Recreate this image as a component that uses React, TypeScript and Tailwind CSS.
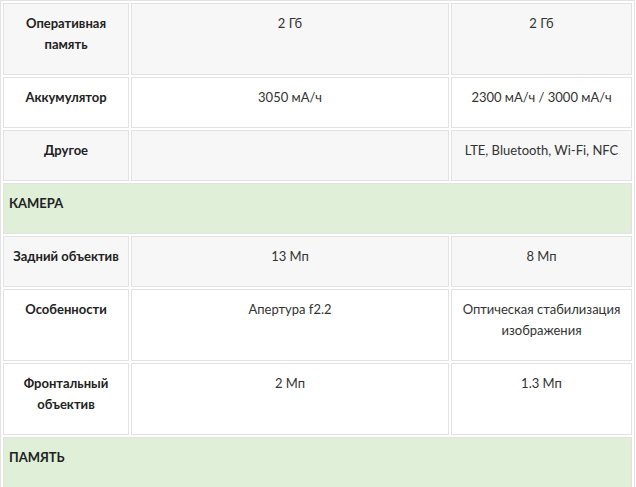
import React from "react";

type Row =
  | { kind: "section"; title: string }
  | { kind: "spec"; label: React.ReactNode; a: React.ReactNode; b: React.ReactNode; shade?: boolean };

const rows: Row[] = [
  { kind: "spec", label: <>Оперативная<br />память</>, a: "2 Гб", b: "2 Гб", shade: true },
  { kind: "spec", label: "Аккумулятор", a: "3050 мА/ч", b: "2300 мА/ч / 3000 мА/ч" },
  { kind: "spec", label: "Другое", a: "", b: "LTE, Bluetooth, Wi-Fi, NFC", shade: true },
  { kind: "section", title: "КАМЕРА" },
  { kind: "spec", label: "Задний объектив", a: "13 Мп", b: "8 Мп", shade: true },
  { kind: "spec", label: "Особенности", a: "Апертура f2.2", b: <>Оптическая стабилизация<br />изображения</> },
  { kind: "spec", label: <>Фронтальный<br />объектив</>, a: "2 Мп", b: "1.3 Мп" },
  { kind: "section", title: "ПАМЯТЬ" },
];

const cell = "border border-[#e2e2e2] pt-[9px] pb-[19px] px-[5px] align-top text-center leading-[21px]";

const App = () => {
  return (
    <div className="w-[636px] h-[487px] overflow-hidden bg-white font-['Lato','Liberation_Sans',sans-serif] text-[13px] text-[#333]">
      <table className="w-[635px] table-fixed border-separate border-spacing-[2px] border border-[#e2e2e2]">
        <colgroup>
          <col className="w-[126px]" />
          <col className="w-[318px]" />
          <col className="w-[181px]" />
        </colgroup>
        <tbody>
          {rows.map((row, i) =>
            row.kind === "section" ? (
              <tr key={i}>
                <td colSpan={3} className={`${cell} bg-[#dfefd8] !text-left font-bold text-[#222]`}>
                  {row.title}
                </td>
              </tr>
            ) : (
              <tr key={i} className={row.shade ? "bg-[#f7f7f7]" : "bg-white"}>
                <td className={`${cell} font-bold text-[#222]`}>{row.label}</td>
                <td className={cell}>{row.a}</td>
                <td className={cell}>{row.b}</td>
              </tr>
            )
          )}
        </tbody>
      </table>
    </div>
  );
};

export default App;
